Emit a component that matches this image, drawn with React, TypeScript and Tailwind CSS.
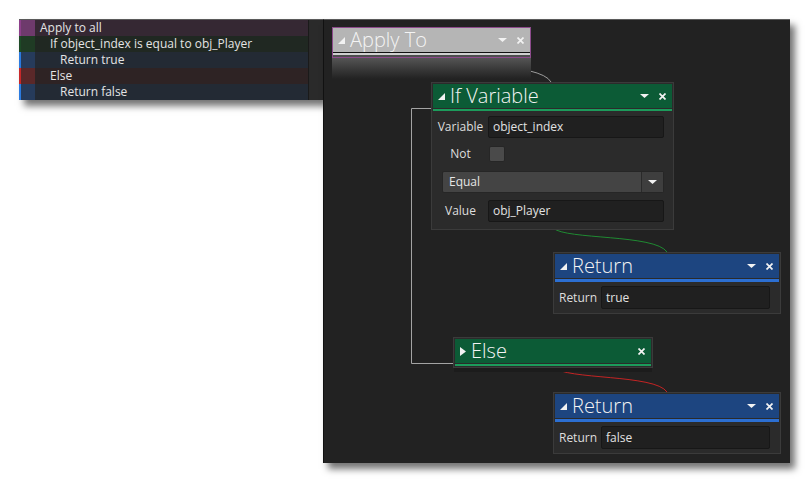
import React from "react";

const font = "font-['Open_Sans','Noto_Sans',sans-serif]";

const rows = [
  { label: "Apply to all", pad: "pl-[5px]", bar: "bg-[#8c3f8a]", tint: "bg-[#6e3a6c]", bg: "bg-[#352833]" },
  { label: "If object_index is equal to obj_Player", pad: "pl-[15px]", bar: "bg-[#1d4a26]", tint: "bg-[#1f3b24]", bg: "bg-[#202822]" },
  { label: "Return true", pad: "pl-[25px]", bar: "bg-[#2b7be0]", tint: "bg-[#263b5b]", bg: "bg-[#232a34]" },
  { label: "Else", pad: "pl-[15px]", bar: "bg-[#c8282a]", tint: "bg-[#5a2829]", bg: "bg-[#2e2324]" },
  { label: "Return false", pad: "pl-[25px]", bar: "bg-[#2b7be0]", tint: "bg-[#263b5b]", bg: "bg-[#232a34]" },
];

function Expand() {
  return (
    <svg width="7" height="7" viewBox="0 0 7 7" className="shrink-0">
      <polygon points="7,0 7,7 0,7" fill="#f2f2f2" />
    </svg>
  );
}

function Collapsed() {
  return (
    <svg width="6" height="9" viewBox="0 0 6 9" className="shrink-0">
      <polygon points="0,0 6,4.5 0,9" fill="#f2f2f2" />
    </svg>
  );
}

function Menu() {
  return (
    <svg width="9" height="4" viewBox="0 0 9 4" className="shrink-0">
      <polygon points="0,0 9,0 4.5,4" fill="#f2f2f2" />
    </svg>
  );
}

function Close() {
  return (
    <svg width="7" height="7" viewBox="0 0 7 7" className="shrink-0">
      <path d="M0.5 0.5 L6.5 6.5 M6.5 0.5 L0.5 6.5" stroke="#f2f2f2" strokeWidth="1.7" />
    </svg>
  );
}

function Header({
  title,
  bg,
  collapsed,
  menu = true,
}: {
  title: string;
  bg: string;
  collapsed?: boolean;
  menu?: boolean;
}) {
  return (
    <div className={`flex h-[24px] items-center pl-[5px] pr-[6px] ${bg}`}>
      {collapsed ? <Collapsed /> : <Expand />}
      <span className="ml-[5px] text-[20px] font-light leading-none text-[#f4f4f4]">{title}</span>
      <div className="ml-auto flex items-center gap-[10px]">
        {menu && <Menu />}
        <Close />
      </div>
    </div>
  );
}

function Field({ value, h = "h-[22px]" }: { value: string; h?: string }) {
  return (
    <div className={`flex ${h} flex-1 items-center rounded-[2px] border border-[#171717] bg-[#202020] px-[4px] text-[12px] leading-none text-[#e2e2e2]`}>
      {value}
    </div>
  );
}

function ReturnNode({ value, top }: { value: string; top: string }) {
  return (
    <div className={`absolute left-[229px] ${top} w-[228px] border border-[#3b3b3b] bg-[#2b2b2b] p-px`}>
      <Header title="Return" bg="bg-[#1d4580]" />
      <div className="mt-[1px] h-[3px] bg-[#2c6fd2]" />
      <div className="flex items-center pb-[3px] pr-[9px] pt-[4px]">
        <span className="w-[46px] text-center text-[12px] leading-none text-[#dedede]">Return</span>
        <Field value={value} h="h-[23px]" />
      </div>
    </div>
  );
}

export default function App() {
  return (
    <div className={`relative h-[483px] w-[809px] overflow-hidden bg-white ${font}`}>
      <div className="flex items-start pl-[19px] pt-[19px]">
        <div className="flex h-[81px] w-[304px] border-t border-[#5a5a5a] shadow-[5px_6px_7px_rgba(0,0,0,0.55)]">
          <div className="w-[289px] bg-[#232323]">
            {rows.map((r) => (
              <div key={r.label} className={`flex h-[16px] ${r.bg}`}>
                <div className={`w-[2px] ${r.bar}`} />
                <div className={`w-[14px] ${r.tint}`} />
                <div className={`${r.pad} flex items-center text-[12px] leading-none text-[#e4e4e4]`}>{r.label}</div>
              </div>
            ))}
          </div>
          <div className="w-[1px] bg-[#1a1a1a]" />
          <div className="w-[14px] bg-[#2a2a2a]" />
        </div>

        <div className="relative h-[444px] w-[467px] border-l border-t border-[#111111] border-t-[#5a5a5a] bg-[#222222] shadow-[5px_6px_7px_rgba(0,0,0,0.55)]">
          <svg className="absolute inset-0" width="466" height="443" viewBox="324 20 466 443">
            <path d="M432 57 C 446 66, 540 62, 551 82" fill="none" stroke="#9c9c9c" strokeWidth="1" />
            <path d="M431 108.5 H411.5 V363.5 H453" fill="none" stroke="#a4a4a4" strokeWidth="1" />
            <path d="M553 228 C 566 240, 655 234, 667 252" fill="none" stroke="#1f8a32" strokeWidth="1" />
            <path d="M553 367 C 566 380, 655 374, 667 392" fill="none" stroke="#c42424" strokeWidth="1" />
          </svg>

          {/* Apply To */}
          <div className="absolute left-[8px] top-[7px] w-[199px]">
            <div className="border border-[#8d4b8c]">
              <Header title="Apply To" bg="bg-[#b5b5b5]" />
              <div className="h-[1px] bg-[#111111]" />
              <div className="h-[2px] bg-[#cfcfcf]" />
              <div className="h-[2px] bg-[#4e4e4e]" />
            </div>
            <div className="h-[21px] bg-gradient-to-b from-[#555555] to-[#222222]" />
          </div>

          {/* If Variable */}
          <div className="absolute left-[107px] top-[62px] w-[243px] border border-[#3b3b3b] bg-[#2b2b2b] p-px">
            <Header title="If Variable" bg="bg-[#0c5b36]" />
            <div className="mt-[1px] h-[2px] bg-[#1c9b5b]" />
            <div className="flex flex-col pb-[6px] pr-[8px] pt-[5px] text-[12px] leading-none text-[#dedede]">
              <div className="flex h-[22px] items-center">
                <span className="w-[55px] text-center">Variable</span>
                <Field value="object_index" />
              </div>
              <div className="mt-[8px] flex h-[16px] items-center">
                <span className="w-[55px] text-center">Not</span>
                <div className="ml-[1px] h-[16px] w-[16px] rounded-[2px] border border-[#262626] bg-[#4a4a4a]" />
              </div>
              <div className="ml-[9px] mt-[9px] flex h-[22px] rounded-[2px] border border-[#262626] bg-[#444444]">
                <div className="flex flex-1 items-center pl-[6px] text-[#e6e6e6]">Equal</div>
                <div className="flex w-[22px] items-center justify-center border-l border-[#2a2a2a] bg-[#3e3e3e]">
                  <Menu />
                </div>
              </div>
              <div className="mt-[7px] flex h-[22px] items-center">
                <span className="w-[55px] text-center">Value</span>
                <Field value="obj_Player" />
              </div>
            </div>
          </div>

          <ReturnNode value="true" top="top-[232px]" />

          {/* Else */}
          <div className="absolute left-[129px] top-[317px] w-[200px]">
            <div className="border border-[#3b3b3b] bg-[#2b2b2b] p-px">
              <Header title="Else" bg="bg-[#0c5b36]" collapsed menu={false} />
              <div className="mt-[1px] h-[2px] bg-[#1c9b5b]" />
            </div>
            <div className="mx-[1px] h-[4px] bg-[#1c1c1c]" />
          </div>

          <ReturnNode value="false" top="top-[372px]" />
        </div>
      </div>
    </div>
  );
}
